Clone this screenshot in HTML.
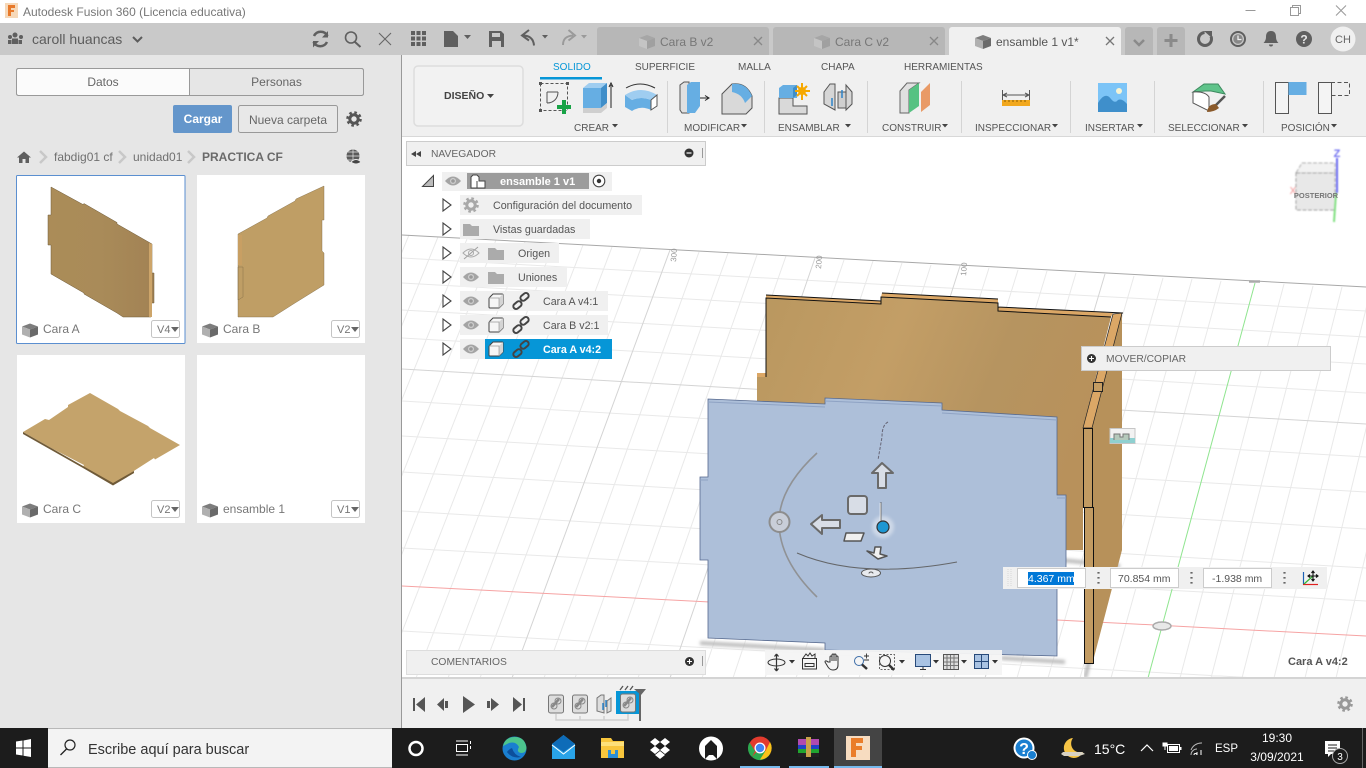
<!DOCTYPE html>
<html lang="es"><head><meta charset="utf-8"><title>Autodesk Fusion 360</title>
<style>
html,body{margin:0;padding:0;width:1366px;height:768px;overflow:hidden;background:#fff}
svg{display:block;position:absolute;left:0;top:0}
text{font-family:"Liberation Sans",sans-serif;white-space:pre}
.g{fill:#666}.n{font-size:10.7px;fill:#555}.r{font-size:10px;fill:#555}
.c{font-size:12px;fill:#777}.v{font-size:11px;fill:#777}.w{fill:#fff}
</style></head><body>
<svg width="1366" height="768" viewBox="0 0 1366 768" xmlns="http://www.w3.org/2000/svg">
<defs>
<g id="gear"><circle r="4.2" fill="none" stroke="currentColor" stroke-width="3"/><circle r="6.6" fill="none" stroke="currentColor" stroke-width="2.4" stroke-dasharray="2.6 2.6"/></g>
<g id="cube"><path d="M-8-3 0-6 8-3 0 0z" fill="#7d7d7d"/><path d="M-8-3 0 0V8L-8 5z" fill="#b0b0b0"/><path d="M8-3 0 0V8L8 5z" fill="#6a6a6a"/></g>
<g id="eye"><path d="M-8 0Q0-9 8 0Q0 9-8 0z" fill="#a4a4a4"/><circle r="3" fill="#cfcfcf"/><circle r="1.800" fill="#999"/></g>
<path id="fold" d="M-8-6h7l2 2h7v10h-16z" fill="#ababab"/>
<path id="exp" d="M0 0V12L8 6z" fill="#fff" stroke="#444" stroke-width="1.100"/>
<g id="part"><path d="M-7-2Q-7-3-6-4L-3-7H6Q7-7 7-6V3L3 7H-6Q-7 7-7 6z" fill="#f6f6f6" stroke="#444" stroke-width="1"/><path d="M3-3V7L7 3V-7z" fill="#d4d4d4"/><path d="M-7-3H3V7" fill="none" stroke="#999" stroke-width=".7"/></g>
<g id="chain" fill="none" stroke="#444" stroke-width="2"><rect x="-1" y="-6.500" width="9" height="5.500" rx="2.700" transform="rotate(-40 3 -4)"/><rect x="-8" y="1" width="9" height="5.500" rx="2.700" transform="rotate(-40 -3 4)"/></g>
<g id="tl"><rect x="-7.500" y="-9" width="15" height="18" rx="2" fill="#ddd" stroke="#777"/><path d="M-4 3 3-5" stroke="#888" stroke-width="2.500" fill="none"/><circle cx="-2" cy="2" r="3" fill="none" stroke="#888"/><circle cx="2" cy="-3" r="3" fill="none" stroke="#888"/></g>
<clipPath id="vp"><rect x="402" y="137" width="964" height="541"/></clipPath>
<linearGradient id="wood" x1="0" y1="0" x2="1" y2=".3"><stop offset="0" stop-color="#b9975f"/><stop offset=".4" stop-color="#c39e66"/><stop offset=".7" stop-color="#b69460"/><stop offset="1" stop-color="#b8915b"/></linearGradient>
<linearGradient id="woodA" x1="0" y1="0" x2="1" y2="0"><stop offset="0" stop-color="#ab8c58"/><stop offset=".5" stop-color="#a98b59"/><stop offset="1" stop-color="#a28254"/></linearGradient>
<filter id="b1"><feGaussianBlur stdDeviation="1.500"/></filter>
<filter id="b2" x="-20%" y="-20%" width="140%" height="140%"><feGaussianBlur stdDeviation=".7"/></filter>
</defs>

<!-- title bar -->
<rect width="1366" height="23" fill="#fff"/>
<rect x="5" y="3" width="13" height="15" fill="#f6d8b8"/><path d="M8 5h7v3h-4v2h3v2h-3v4H8z" fill="#e8792a"/>
<text x="23" y="16" font-size="12" fill="#777">Autodesk Fusion 360 (Licencia educativa)</text>
<path d="M1245.500 10.500h10M1336 5.500l10 10M1346 5.500l-10 10" stroke="#999" fill="none"/>
<path d="M1290.500 7.500h8v8h-8zM1292.500 7.500v-2h8v8h-2" stroke="#999" fill="none"/>

<!-- left panel -->
<rect y="23" width="401" height="705" fill="#e6e6e6"/>
<rect y="23" width="402" height="32" fill="#c9c9c9"/>
<rect x="401" y="55" width="1" height="673" fill="#999"/>
<g fill="#5f5f5f"><circle cx="15" cy="35" r="2.500"/><circle cx="10" cy="37" r="2"/><circle cx="21" cy="37" r="2"/><rect x="12" y="38.500" width="6" height="5.500"/><rect x="8" y="40" width="3.500" height="4"/><rect x="18.500" y="40" width="3.500" height="4"/></g>
<text x="32" y="44" font-size="14" fill="#5c5c5c">caroll huancas</text>
<path d="M133 37l4.500 4.500 4.500-4.500" stroke="#5c5c5c" stroke-width="2" fill="none"/>
<path d="M327.500 36A7.500 7.500 0 0 0 314 36M313.500 42a7.500 7.500 0 0 0 13.500 0" stroke="#5f5f5f" stroke-width="2.500" fill="none"/><path d="M328 31v6.500h-6zM313 47.500v-6.500h6z" fill="#5f5f5f"/>
<circle cx="351" cy="37.500" r="5.500" fill="none" stroke="#5f5f5f" stroke-width="1.600"/><path d="M355 42l5.500 5" stroke="#5f5f5f" stroke-width="2"/>
<path d="M379 33l12 12M391 33l-12 12" stroke="#666" stroke-width="1.100"/>

<rect x="16.500" y="68.500" width="347" height="27" rx="2" fill="#e6e6e6" stroke="#999"/>
<path d="M19 69H189.500V95H19a2 2 0 0 1-2-2V71a2 2 0 0 1 2-2z" fill="#fbfbfb"/>
<rect x="16.500" y="68.500" width="347" height="27" rx="2" fill="none" stroke="#999"/><path d="M189.500 69v26" stroke="#999"/>
<text x="103" y="86" font-size="12" fill="#666" text-anchor="middle">Datos</text>
<text x="276.500" y="86" font-size="12" fill="#666" text-anchor="middle">Personas</text>
<rect x="173" y="105" width="59" height="28" rx="2" fill="#6496cb"/>
<text x="203" y="123" font-size="12" font-weight="bold" fill="#fff" text-anchor="middle">Cargar</text>
<rect x="238.500" y="105.500" width="99" height="27" rx="2" fill="#e8e8e8" stroke="#999"/>
<text x="288" y="124" font-size="12" fill="#666" text-anchor="middle">Nueva carpeta</text>
<use href="#gear" x="354" y="119" color="#555"/>
<path d="M17 157.500l7-6 7 6h-2v5.500h-3.500v-4h-3v4H19v-5.500z" fill="#5f5f5f"/>
<g fill="none" stroke="#c8c8c8" stroke-width="2.500"><path d="M40 151l6 6-6 6M119 151l6 6-6 6M188 151l6 6-6 6"/></g>
<text x="54" y="161" font-size="12" fill="#707070">fabdig01 cf</text>
<text x="133" y="161" font-size="12" fill="#707070">unidad01</text>
<text x="202" y="161" font-size="12" font-weight="bold" fill="#6a6a6a">PRACTICA CF</text>
<circle cx="353" cy="156" r="6.500" fill="#5a5a5a"/><path d="M346.500 156h13M353 149.500v13M348 152h10M348 160h10" stroke="#e6e6e6" stroke-width=".7"/><path d="M351 162q5-5 10 0q-5 4-10 0z" fill="#444" stroke="#e6e6e6"/>

<!-- cards -->
<rect x="17" y="175" width="168" height="168" fill="#fff"/>
<rect x="16.500" y="175.500" width="168.500" height="168" rx="1" fill="none" stroke="#5b8fd0"/>
<rect x="197" y="175" width="168" height="168" fill="#fff"/>
<rect x="17" y="355" width="168" height="168" fill="#fff"/>
<rect x="197" y="355" width="168" height="168" fill="#fff"/>
<path d="M51 187 83 204.500 84 203.500 117 222.500 117 224 152 244V273H154V303H151V317H123L117 313 84 294V293L51 274V245H48V215H51z" fill="url(#woodA)" stroke="#6e5a38" stroke-width=".5"/>
<path d="M149 243 152 244V317H149z" fill="#cda56a"/>
<path d="M238 234 267 218 268 216 295 201 296 199 324 186V220H322V251L324 253V285L295 303 273 317H238V267H243V297L238 300z" fill="#bf9e65" stroke="#7c6844" stroke-width=".4"/>
<path d="M238 235H242V265H238z" fill="#c89f63"/>
<path d="M23 432 45 419 49 420 68 407 68 405 90 393 118 409 120 411 148 426 150 428 180 445 155 459.500 154 458 133 471.500 134 473 113 485 83 467 84 465 53 449z" fill="#c4a36b"/>
<path d="M23 432 53 449 83 466 113 483 134 471V473L113 485.500 83 468 53 451 23 434z" fill="#6f5a38"/>
<g transform="translate(30 329.500)"><use href="#cube"/></g><g transform="translate(210 329.500)"><use href="#cube"/></g><g transform="translate(30 509.500)"><use href="#cube"/></g><g transform="translate(210 509.500)"><use href="#cube"/></g>
<text x="43" y="333" class="c">Cara A</text><text x="223" y="333" class="c">Cara B</text><text x="43" y="513" class="c">Cara C</text><text x="223" y="513" class="c">ensamble 1</text>
<g fill="#fff" stroke="#c4c4c4"><rect x="151.500" y="320.500" width="28" height="17" rx="2"/><rect x="331.500" y="320.500" width="28" height="17" rx="2"/><rect x="151.500" y="500.500" width="28" height="17" rx="2"/><rect x="331.500" y="500.500" width="28" height="17" rx="2"/></g>
<text x="157" y="333" class="v">V4</text><text x="337" y="333" class="v">V2</text><text x="157" y="513" class="v">V2</text><text x="337" y="513" class="v">V1</text>
<path d="M171 327h8l-4 5zM351 327h8l-4 5zM171 507h8l-4 5zM351 507h8l-4 5z" fill="#666"/>

<!-- top bar -->
<rect x="402" y="23" width="964" height="32" fill="#c9c9c9"/>
<g fill="#5f5f5f"><path d="M411 31h4v4h-4zM416.500 31h4v4h-4zM422 31h4v4h-4zM411 36.500h4v4h-4zM416.500 36.500h4v4h-4zM422 36.500h4v4h-4zM411 42h4v4h-4zM416.500 42h4v4h-4zM422 42h4v4h-4z"/>
<path d="M444 31h9l5 5v11h-14z"/><path d="M464 35h7l-3.500 4z"/>
<path d="M489 31h12l3 3v13h-15zM492 33v4h8v-4zM492 41v6h9v-6z" fill-rule="evenodd"/>
<path d="M542 35h6l-3 3.500z"/></g>
<path d="M529 30l-7 5.500 7 5M522.500 35.500c7 0 11 3 11.500 10" fill="none" stroke="#5f5f5f" stroke-width="2"/>
<path d="M563 45c0-6 3-9 10-9.500M568.500 30l6.500 5.500-6.500 5" fill="none" stroke="#9a9a9a" stroke-width="2"/><path d="M581 35h6l-3 3.500z" fill="#9a9a9a"/>
<path d="M600 27h166a3 3 0 0 1 3 3v25H597V30a3 3 0 0 1 3-3zM776 27h166a3 3 0 0 1 3 3v25H773V30a3 3 0 0 1 3-3z" fill="#b7b7b7"/>
<path d="M952 27h166a3 3 0 0 1 3 3v25H949V30a3 3 0 0 1 3-3z" fill="#f0f0f0"/>
<path d="M1128 27h22a3 3 0 0 1 3 3v25h-28V30a3 3 0 0 1 3-3zM1160 27h22a3 3 0 0 1 3 3v25h-28V30a3 3 0 0 1 3-3z" fill="#b7b7b7"/>
<g transform="translate(647 41)"><path d="M-8-3 0-6 8-3 0 0z" fill="#a6a6a6"/><path d="M-8-3 0 0V8L-8 5z" fill="#c4c4c4"/><path d="M8-3 0 0V8L8 5z" fill="#a0a0a0"/></g>
<g transform="translate(822 41)"><path d="M-8-3 0-6 8-3 0 0z" fill="#a6a6a6"/><path d="M-8-3 0 0V8L-8 5z" fill="#c4c4c4"/><path d="M8-3 0 0V8L8 5z" fill="#a0a0a0"/></g>
<g transform="translate(983 41)"><use href="#cube"/></g>
<text x="660" y="46" font-size="12" fill="#777">Cara B v2</text>
<text x="835" y="46" font-size="12" fill="#777">Cara C v2</text>
<text x="996" y="46" font-size="12" fill="#555">ensamble 1 v1*</text>
<path d="M754 37l8 8M762 37l-8 8M930 37l8 8M938 37l-8 8" stroke="#888" stroke-width="1.300"/>
<path d="M1106 37l8 8M1114 37l-8 8" stroke="#777" stroke-width="1.300"/>
<path d="M1134 40l5 5 5-5" stroke="#8a8a8a" stroke-width="2.500" fill="none"/>
<path d="M1171 34v13M1164.500 40.500h13" stroke="#8a8a8a" stroke-width="3"/>
<circle cx="1205" cy="39" r="6.500" fill="none" stroke="#5f5f5f" stroke-width="3" stroke-dasharray="30 8"/><path d="M1204 31h8v7z" fill="#5f5f5f"/>
<circle cx="1238" cy="39" r="7" fill="none" stroke="#5f5f5f" stroke-width="2"/><circle cx="1238" cy="39" r="4.700" fill="#888"/><path d="M1238 35.500v4h3.500" stroke="#eee" stroke-width="1.300" fill="none"/>
<path d="M1271 31c4 0 5 3 5 6 0 3 1.500 5 2.500 6h-15c1-1 2.500-3 2.500-6 0-3 1-6 5-6zM1269 44.500h4a2 2 0 0 1-4 0z" fill="#5f5f5f"/>
<circle cx="1304" cy="39" r="8" fill="#5f5f5f"/><text x="1304" y="43.500" font-size="12" font-weight="bold" fill="#e6e6e6" text-anchor="middle">?</text>
<circle cx="1343" cy="39" r="12.500" fill="#f0f0f0"/><text x="1343" y="43" font-size="11" fill="#666" text-anchor="middle">CH</text>

<!-- toolbar -->
<rect x="402" y="55" width="964" height="82" fill="#f0f0f0"/>
<rect x="402" y="136" width="964" height="1" fill="#d8d8d8"/>
<rect x="414" y="66" width="109" height="60" rx="4" fill="#f2f2f2" stroke="#ddd" stroke-width="1.500"/>
<text x="444" y="99" font-size="10.500" font-weight="bold" fill="#444">DISEÑO</text><path d="M487 94h7l-3.500 4z" fill="#444"/>
<g font-size="10" fill="#555"><text x="553" y="70" fill="#0696d7">SOLIDO</text><text x="635" y="70">SUPERFICIE</text><text x="738" y="70">MALLA</text><text x="821" y="70">CHAPA</text><text x="904" y="70">HERRAMIENTAS</text>
<text x="574" y="131">CREAR</text><text x="684" y="131">MODIFICAR</text><text x="778" y="131">ENSAMBLAR</text><text x="882" y="131">CONSTRUIR</text><text x="975" y="131">INSPECCIONAR</text><text x="1085" y="131">INSERTAR</text><text x="1168" y="131">SELECCIONAR</text><text x="1281" y="131">POSICIÓN</text></g>
<rect x="540" y="77" width="62" height="2.500" fill="#0696d7"/>
<path d="M612 124h6l-3 3.500zM741 124h6l-3 3.500zM845 124h6l-3 3.500zM942 124h6l-3 3.500zM1052 124h6l-3 3.500zM1137 124h6l-3 3.500zM1242 124h6l-3 3.500zM1331 124h6l-3 3.500z" fill="#444"/>
<path d="M667.500 81v52M764.500 81v52M867.500 81v52M961.500 81v52M1070.500 81v52M1154.500 81v52M1263.500 81v52" stroke="#d4d4d4"/>
<!-- sketch -->
<rect x="540.500" y="83.500" width="27" height="27" fill="none" stroke="#555" stroke-dasharray="3 2"/><path d="M547 92h11M547 92v11M558 92c0 6-4 11-11 11" fill="none" stroke="#555"/><path d="M539 82h3v3h-3zM566 82h3v3h-3zM539 109h3v3h-3z" fill="#555"/>
<path d="M562 100h4v5h5v4h-5v5h-4v-5h-5v-4h5z" fill="#18a346"/>
<!-- extrude -->
<path d="M583 88 589 83H607L601 88z" fill="#9fcdf0"/><rect x="583" y="88" width="18" height="20" fill="#66aee3"/><path d="M601 88 607 83V103L601 108z" fill="#3f8ec9"/><path d="M583 108h18l6-5v5l-6 5h-18z" fill="#cfcfcf"/><path d="M611 108V85M609 87l2-4 2 4" stroke="#222" fill="none"/>
<!-- revolve -->
<path d="M625 95 632 100Q641 96 651 100V110Q641 105 632 111L625 107z" fill="#66aee3"/><path d="M625 95Q641 85 657 95L651 100Q641 96 632 100z" fill="#9fcdf0"/><path d="M651 100 657 95V106L651 110z" fill="#fff" stroke="#555"/><path d="M626 88Q640 80 655 88" fill="none" stroke="#333"/>
<!-- press pull -->
<path d="M680 85 684 82H689V113H682L680 110z" fill="#e0e0e0" stroke="#555"/><path d="M687 85 691 82H700V106L695 113H687z" fill="#66aee3"/><path d="M700 98h8M705 95.500l4 2.500-4 2.500" stroke="#222" fill="none"/>
<!-- fillet -->
<path d="M722 94 732 84Q746 82 752 96V108L746 114H722z" fill="#d9d9d9" stroke="#555"/><path d="M732 84Q746 82 752 96L745 103Q742 94 732 92z" fill="#66aee3"/>
<!-- assemble -->
<path d="M779 98h14v8h14v8h-28z" fill="#d9d9d9" stroke="#555"/><path d="M779 88l4-3h14v13h-18z" fill="#66aee3"/><path d="M793 98V88l4-3v10z" fill="#3f8ec9"/>
<path d="M802 83v7M802 93v7M795 91h15M797 86l10 10M807 86l-10 10" stroke="#f6a800" stroke-width="2"/><circle cx="802" cy="91" r="4" fill="#f6a800"/>
<!-- joint -->
<path d="M824 92 830 84h5v26l-11-6zM852 92 846 85v25l6-6z" fill="#d6d6d6" stroke="#555"/><path d="M838 92h8v16h-8z" fill="#cfcfcf" stroke="#555"/><path d="M832 98v8M842 90v8" stroke="#2d83c9" stroke-width="1.500"/>
<!-- construct -->
<path d="M900 91 907 83H919L909 90V113H900z" fill="#e0e0e0" stroke="#666"/><path d="M909 90 919 83V106L909 113z" fill="#56c282"/><path d="M921 92 930 83V105L921 112z" fill="#e99a66"/>
<!-- measure -->
<path d="M1002.500 90v10M1029.500 90v10M1003 95h26M1007 93l-4 2 4 2M1025 93l4 2-4 2" stroke="#555" fill="none"/><rect x="1002" y="100" width="28" height="6" fill="#f2a81d"/><path d="M1005 100v2M1009 100v2M1013 100v2M1017 100v2M1021 100v2M1025 100v2" stroke="#8a5c00"/>
<!-- insert -->
<rect x="1098" y="83" width="29" height="29" fill="#7cc4f7"/><path d="M1098 112V103Q1105 91 1111 99 1115 104 1118 100 1122 98 1127 104V112z" fill="#3f8fcb"/><circle cx="1119" cy="91" r="3" fill="#f6f3d4"/>
<!-- select -->
<path d="M1193 92 1204 84H1218L1225 94 1211 91 1205 91z" fill="#5fc38a" stroke="#3d8a5f"/><path d="M1193 92V103L1209 111V97Q1205 91 1193 92z" fill="#fff" stroke="#555"/>
<path d="M1225 96 1215 106" stroke="#555" stroke-width="2.500"/><path d="M1216 104Q1208 104 1207 112 1214 112 1219 108z" fill="#8a5a2b"/>
<!-- position -->
<rect x="1275.500" y="82.500" width="13" height="31" fill="#f4f4f4" stroke="#555"/><rect x="1288.500" y="82" width="18" height="13" fill="#66aee3"/>
<rect x="1318.500" y="82.500" width="13" height="31" fill="#f4f4f4" stroke="#555"/><path d="M1331 82.500h18.500v13h-18.500" fill="none" stroke="#555" stroke-dasharray="4 2.500"/>

<!-- viewport -->
<rect x="402" y="137" width="964" height="541" fill="#fff"/>
<g clip-path="url(#vp)">
<path stroke="#e9e9e9" fill="none" d="M409 235 226 678M438 237 258 678M467 239 289 678M496 240 321 678M525 242 353 678M554 243 384 678M583 245 416 678M612 247 448 678M641 248 480 678M699 252 544 678M728 253 575 678M757 255 607 678M786 256 638 678M844 260 702 678M873 261 733 678M902 263 765 678M931 265 796 678M989 268 859 678M1018 270 891 678M1047 271 922 678M1076 273 954 678M1134 276 1017 678M1163 278 1048 678M1192 279 1080 678M1221 281 1111 678M1284 284 1180 678M1313 286 1211 678M1342 287 1242 678M1371 289 1274 678M1400 290 1305 678M1429 292 1336 678
M402 258 1366 311M402 283 1366 337M402 310 1366 364M402 338 1366 393M402 401 1366 457M402 436 1366 492M402 472 1366 529M402 511 1366 568M402 548 1366 601M402 631 1366 684"/>
<path stroke="#d4d4d4" fill="none" d="M670 250 512 678M815 258 670 678M960 266 828 678M1105 274 985 678M1458 294 1368 678M402 369 1366 424"/>
<path stroke="#a8a8a8" fill="none" d="M402 235 1366 287"/>
<path d="M402 586 1366 636" stroke="#f6a3a3"/>
<path d="M1255 283 1148 678" stroke="#8fe58f"/>
<g font-size="8" fill="#999"><text transform="translate(676 262) rotate(-85)">300</text><text transform="translate(821 269) rotate(-85)">200</text><text transform="translate(966 276) rotate(-85)">100</text></g>
<ellipse cx="1162" cy="626" rx="9" ry="4" fill="#e8e8e8" stroke="#aaa" stroke-width="1.500"/>
<path d="M1249 281.500h11" stroke="#aaa" stroke-width="2.500"/>
<path d="M700 643 825 650M1001 658 1065 662M1060 560 1120 566" stroke="#bcbcbc" stroke-width="4" filter="url(#b1)"/>
<path d="M1092 650 1085 678" stroke="#b8b8b8" stroke-width="4" filter="url(#b1)"/>

<!-- brown panel -->
<path d="M1122 313V550L1092 665V428z" fill="#b7915a"/>
<path d="M766 298 881 304V297L998 303V310L1111 317 1083 428V550H1066L757 530V377H766z" fill="url(#wood)"/>
<path d="M766 295 881 301 881 304 766 298zM882 293 998 299V303L881 297zM998 307 1113 313 1111 317 998 311zM757 373H766V377H757z" fill="#dba766"/>
<path d="M766 377V298L881 304V297L998 303V311L1111 317M766 295 881 301M882 293 998 299M998 307 1123 313" fill="none" stroke="#111" stroke-width="1"/>
<path d="M1113 314 1122 313 1092 428H1083z" fill="#dba766" stroke="#222" stroke-width=".7"/>
<rect x="1093.500" y="382.500" width="9" height="9" fill="#c49c62" stroke="#222"/>
<rect x="1083.500" y="428.500" width="9" height="79" fill="#c29b62" stroke="#111"/>
<rect x="1084.500" y="507.500" width="9" height="156" fill="#c29b62" stroke="#111"/>
<path d="M1110 428.500h25v15h-25z" fill="#f2f2f2" stroke="#c6c6c6"/><path d="M1110 438h25v5h-25z" fill="#8fd0d0"/><path d="M1114 440v-6h6v3h3v-3h6v6" fill="#b5c9bb" stroke="#777"/>

<!-- blue panel -->
<path d="M708 399 825 404V398L942 403V410L1057 417V495H1066V575H1057V656L825 650V643L708 638V560H700V477H708z" fill="#adbfd9" stroke="#56698e" stroke-width=".8"/>
<path d="M708 402 825 407M825 401 942 406M942 413 1057 420M1057 498H1066M700 480H708" stroke="#8fa3c4" fill="none"/>

<!-- gizmo -->
<path d="M817 453Q779 488 779 522 779 560 817 597" fill="none" stroke="#8d8d8d" stroke-width="1.600" opacity=".9"/>
<path d="M797 553Q860 580 957 562" fill="none" stroke="#5c5c5c" stroke-width="1" opacity=".9"/>
<path d="M888 422Q882 425 882 437L878 460" fill="none" stroke="#667" stroke-dasharray="3 1.500"/>
<path d="M882 463 872 473H878V488H886V473H893z" fill="#d8dde6" stroke="#6a6a6a" stroke-width="2" stroke-linejoin="round"/>
<rect x="848" y="496" width="19" height="18" rx="3" fill="#d8dde6" stroke="#6a6a6a" stroke-width="2"/>
<path d="M811 524 822 515V520H840V528H822V534z" fill="#d8dde6" stroke="#6a6a6a" stroke-width="2" stroke-linejoin="round"/>
<path d="M846 533H864L861 541H844z" fill="#f0f0f0" stroke="#555" stroke-width="1.500" stroke-linejoin="round"/>
<path d="M867 551 874 553 875 547 881 547 880 554 887 556 878 559z" fill="#f0f0f0" stroke="#555" stroke-width="1.500" stroke-linejoin="round"/>
<circle cx="883" cy="527" r="11" fill="#fff" opacity=".4" filter="url(#b1)"/>
<path d="M880.500 503V523" stroke="#fff" stroke-width="1.500"/><path d="M881 502V522" stroke="#555" stroke-width=".8"/>
<circle cx="883" cy="527" r="6" fill="#1d97d3" stroke="#333" stroke-width="1.200"/>
<circle cx="779.500" cy="522" r="10" fill="#c9ced8" stroke="#8d8d8d" stroke-width="2"/><circle cx="779.500" cy="522" r="2.500" fill="none" stroke="#888"/>
<ellipse cx="871" cy="573" rx="9.500" ry="4" fill="#e8eaee" stroke="#555"/><path d="M869 573.500a2 1.500 0 0 1 4 0" fill="none" stroke="#555"/>

<!-- viewcube -->
<g filter="url(#b2)">
<path d="M1302 163H1335V173H1296z" fill="#f2f2f2" stroke="#aaa" stroke-dasharray="4 1.500"/>
<path d="M1296 173H1335V210H1296z" fill="#e8e8e8" stroke="#999" stroke-dasharray="4 1.500"/>
<path d="M1337 158V193" stroke="#6b6bf0" stroke-width="2"/><path d="M1336 193 1334 222" stroke="#7fe07f" stroke-width="2"/>
<text x="1337" y="157" font-size="11" font-weight="bold" fill="#7070f0" text-anchor="middle">Z</text>
<text x="1293" y="194" font-size="10" fill="#f29090" text-anchor="middle">X</text>
</g>
<text x="1316" y="198" font-size="7.500" font-weight="bold" fill="#777" text-anchor="middle">POSTERIOR</text>
</g>

<!-- navigator -->
<rect x="406.500" y="141.500" width="299" height="24" fill="#f0f0f0" stroke="#ccc"/>
<path d="M416 151v6l-5-3zM421 151v6l-5-3z" fill="#444"/>
<text x="431" y="157" font-size="10.300" fill="#666">NAVEGADOR</text>
<circle cx="689" cy="153" r="4.500" fill="#333"/><path d="M686.500 153h5" stroke="#fff" stroke-width="1.200"/><path d="M702.500 148v10" stroke="#999"/>
<path d="M422.500 186.500 433.500 175.500V186.500z" fill="#bbb" stroke="#444"/>
<rect x="442" y="172" width="170" height="19" fill="#f0f0f0"/>
<use href="#eye" x="453" y="181"/>
<rect x="467" y="173" width="122" height="16" fill="#9c9c9c"/>
<path d="M471 177 473 175H477L479 177V181H485V188H471z" fill="#fff" stroke="#444"/><path d="M477 181V188M479 177V181" stroke="#444" fill="none"/>
<text x="500" y="185" font-size="11" font-weight="bold" fill="#fff">ensamble 1 v1</text>
<circle cx="599" cy="181" r="5.800" fill="#fff" stroke="#444" stroke-width="1.100"/><circle cx="599" cy="181" r="2.200" fill="#333"/>
<g fill="#f0f0f0"><rect x="460" y="195" width="182" height="20"/><rect x="460" y="219" width="130" height="20"/><rect x="460" y="243" width="99" height="20"/><rect x="460" y="267" width="107" height="20"/><rect x="460" y="291" width="148" height="20"/><rect x="460" y="315" width="148" height="20"/><rect x="460" y="339" width="152" height="20"/></g>
<rect x="485" y="339" width="127" height="20" fill="#0696d7"/>
<use href="#exp" x="443" y="199"/><use href="#exp" x="443" y="223"/><use href="#exp" x="443" y="247"/><use href="#exp" x="443" y="271"/><use href="#exp" x="443" y="295"/><use href="#exp" x="443" y="319"/><use href="#exp" x="443" y="343"/>
<use href="#gear" x="471" y="205" color="#a8a8a8"/>
<use href="#fold" x="471" y="230"/>
<path d="M463 253Q471 245 479 253Q471 261 463 253z" fill="none" stroke="#aaa"/><circle cx="471" cy="253" r="2.500" fill="none" stroke="#aaa"/><path d="M464 259 478 247" stroke="#a0a0a0"/>
<use href="#fold" x="496" y="254"/><use href="#eye" x="471" y="277"/><use href="#fold" x="496" y="278"/>
<use href="#eye" x="471" y="301"/><use href="#eye" x="471" y="325"/><use href="#eye" x="471" y="349"/>
<use href="#part" x="496" y="301"/><use href="#part" x="496" y="325"/><use href="#part" x="496" y="349"/>
<use href="#chain" x="521" y="301"/><use href="#chain" x="521" y="325"/><use href="#chain" x="521" y="349"/>
<text x="493" y="209" class="n">Configuración del documento</text>
<text x="493" y="233" class="n">Vistas guardadas</text>
<text x="518" y="257" class="n">Origen</text>
<text x="518" y="281" class="n">Uniones</text>
<text x="543" y="305" class="n">Cara A v4:1</text>
<text x="543" y="329" class="n">Cara B v2:1</text>
<text x="543" y="353" font-size="10.700" font-weight="bold" fill="#fff">Cara A v4:2</text>

<!-- move panel -->
<rect x="1081.500" y="346.500" width="249" height="24" fill="#f0f0f0" stroke="#ccc"/>
<circle cx="1091.500" cy="358.500" r="4.500" fill="#333"/><path d="M1089 358.500h5M1091.500 356v5" stroke="#fff" stroke-width="1.100"/>
<text x="1106" y="362" font-size="10.300" fill="#666">MOVER/COPIAR</text>

<!-- comments -->
<rect x="406.500" y="650.500" width="299" height="24" fill="#f0f0f0" stroke="#ddd"/>
<text x="431" y="665" font-size="10.300" fill="#666">COMENTARIOS</text>
<circle cx="689.500" cy="661.500" r="4.500" fill="#333"/><path d="M687 661.500h5M689.500 659v5" stroke="#fff" stroke-width="1.100"/><path d="M702.500 656v10" stroke="#999"/>

<!-- coordinates bar -->
<rect x="1003" y="567" width="324" height="22" fill="#f0f0f0"/>
<path d="M1008 569v18M1011 569v18" stroke="#d8d8d8" stroke-dasharray="1 1"/>
<g fill="#fff" stroke="#ccc"><rect x="1017.500" y="568.500" width="68" height="19"/><rect x="1110.500" y="568.500" width="68" height="19"/><rect x="1203.500" y="568.500" width="68" height="19"/></g>
<rect x="1028" y="572" width="46" height="13" fill="#0078d7"/>
<text x="1028" y="582" font-size="10.500" fill="#fff">4.367 mm</text>
<text x="1118" y="582" font-size="10.500" fill="#555">70.854 mm</text>
<text x="1212" y="582" font-size="10.500" fill="#555">-1.938 mm</text>
<path d="M1098.500 572v1.600M1098.500 577v1.600M1098.500 582v1.600M1191.500 572v1.600M1191.500 577v1.600M1191.500 582v1.600M1284.500 572v1.600M1284.500 577v1.600M1284.500 582v1.600" stroke="#666" stroke-width="2.200"/>
<path d="M1303.500 572V584.500" stroke="#1a5fb4" stroke-width="1.200"/><path d="M1303 584.500H1318" stroke="#e02020" stroke-width="1.200"/><path d="M1304 584 1313 576" stroke="#36b536" stroke-width="1.200"/>
<path d="M1313 571v10M1308 576h10M1311.500 573l1.500-2 1.500 2M1311.500 579l1.500 2 1.500-2M1310 574.500l-2 1.500 2 1.500M1316 574.500l2 1.500-2 1.500" stroke="#111" fill="none" stroke-width="1.100"/>

<!-- nav bar -->
<rect x="765" y="650" width="237" height="25" fill="#f4f4f4" opacity=".95"/>
<g fill="none" stroke="#333">
<path d="M776.500 654V671M776.500 654l-2 2.500M776.500 654l2 2.500M776.500 671l-2-2.500M776.500 671l2-2.500" stroke-width="1.200"/><ellipse cx="776.500" cy="662.500" rx="8.500" ry="3.500"/>
<rect x="802.500" y="658.500" width="14" height="10.500"/><path d="M805 663.500h9v3h-9z"/><path d="M803 658 806 654l2 2 2-3 2 3 3-2v4"/>
<path d="M830 662v-5a1 1 0 0 1 2 0v4v-6a1 1 0 0 1 2 0v6v-6a1 1 0 0 1 2 0v6v-4a1 1 0 0 1 2 0v8q0 5-5 5-3 0-5-3l-3-5c0-2 2-1 3 0z"/>
<circle cx="859" cy="661" r="4.500" stroke="#3c6da8"/><path d="M862 664.500l5 4.500" stroke-width="2.500"/><path d="M864 656h5M866.500 653.500v5M864 660h5" stroke-width=".9"/>
<rect x="879.500" y="654.500" width="15" height="15" stroke="#666" stroke-dasharray="2 1.500"/><circle cx="885" cy="661" r="5.500"/><path d="M889 665l5 5" stroke-width="2.500"/>
</g>
<rect x="915.500" y="654.500" width="15" height="12" fill="#a9c3e3" stroke="#274a7a"/><path d="M920 669.500h6M923 667v2" stroke="#333"/>
<rect x="943.500" y="654.500" width="15" height="15" fill="#ddd" stroke="#555"/><path d="M947 655v14M950.500 655v14M954 655v14M944 658h14M944 662h14M944 665.500h14" stroke="#777"/>
<rect x="974.500" y="654.500" width="14" height="14" fill="#a9c3e3" stroke="#274a7a"/><path d="M981.500 655v13M975 661.500h13" stroke="#274a7a"/>
<path d="M789 660h6l-3 3.500zM899 660h6l-3 3.500zM933 660h6l-3 3.500zM961 660h6l-3 3.500zM992 660h6l-3 3.500z" fill="#333"/>

<text x="1288" y="665" font-size="11" font-weight="bold" fill="#555">Cara A v4:2</text>

<!-- bottom panel -->
<rect x="402" y="677" width="964" height="2" fill="#d4d4d4"/>
<rect x="402" y="679" width="964" height="49" fill="#f0f0f0"/>
<g fill="#555"><path d="M413 698h2v13h-2zM425 697v15l-9-7.500z"/><path d="M444 698v13l-7-6.500zM445 701h3v7h-3z"/><path d="M463 696v17l12-8.500z"/><path d="M487 701h3v7h-3zM491 698v13l8-6.500z"/><path d="M513 697v15l9-7.500zM523 698h2v13h-2z"/></g>
<use href="#tl" x="556" y="704"/><use href="#tl" x="580" y="704"/>
<g transform="translate(604 704)"><path d="M-7 7V-6L-3-9H0V9zM7 7V-6L3-3V9z" fill="#ddd" stroke="#777"/><path d="M-1-1V6M2-4V3" stroke="#2d83c9" stroke-width="1.500"/></g>
<rect x="616" y="691" width="23" height="23" fill="#0696d7"/><use href="#tl" x="628" y="703"/>
<path d="M620 690 623 686M625 690 628 686M630 690 633 686" stroke="#555" stroke-width="1.300"/>
<path d="M634 689h12l-5 6zM639 689h2v32h-2z" fill="#666"/>
<path d="M556 714v6h72v-6M580 716v4M604 716v4" fill="none" stroke="#cfcfcf" stroke-width="1.500"/>
<use href="#gear" x="1345" y="704" color="#999"/>

<!-- taskbar -->
<rect y="728" width="1366" height="40" fill="#1c1c1c"/>
<path d="M16 741.500 22.500 740.500V747.500H16zM23.500 740.500 31 739V747.500H23.500zM16 748.500H22.500V755.500L16 754.500zM23.500 748.500H31V757L23.500 755.700z" fill="#fff"/>
<rect x="48" y="729" width="344" height="38" fill="#f3f3f3"/><rect x="48" y="728" width="344" height="1" fill="#b8b8b8"/><rect x="48" y="767" width="344" height="1" fill="#b8b8b8"/>
<circle cx="70" cy="745" r="5" fill="none" stroke="#222" stroke-width="1.200"/><path d="M66.500 749 60.500 755" stroke="#222" stroke-width="1.300"/>
<text x="88" y="754" font-size="14.500" fill="#333">Escribe aquí para buscar</text>
<circle cx="416" cy="748.500" r="6.500" fill="none" stroke="#fff" stroke-width="2.500"/>
<path d="M456 741h12M456 755h12M456.500 744.500h11v7h-11zM470.500 741v3M470.500 746v3" stroke="#fff" fill="none"/>
<circle cx="514.500" cy="748.500" r="12" fill="#1a7fd0"/><path d="M503 746Q505 737 515 737 525 737 526.500 748 526 753 521 753 516 752 519 747 516 741 509 743 505 745 503 746z" fill="#4cc48d"/><path d="M507 752Q512 759 521 757 514 755 512 748 509 749 507 752z" fill="#0c4f9c"/>
<path d="M552 744 563.500 735 575 744V759H552z" fill="#29a3e8"/><path d="M552 744 563.500 735 575 744 563.500 752z" fill="#0e6cb8"/><path d="M552 745 563.500 754 575 745" stroke="#fff" fill="none"/>
<path d="M601 738h10l2 3h11v17h-23z" fill="#f8c63d"/><path d="M601 742h23v4h-23z" fill="#fde07a"/><path d="M608 750h10v8h-10z" fill="#2d8fd5"/><path d="M611 750h4v4h-4z" fill="#f8c63d"/>
<path d="M655 738 660 742 655 746 650 742zM665 738 670 742 665 746 660 742zM655 746 660 750 655 754 650 750zM665 746 670 750 665 754 660 750zM660 751 665 755 660 759 655 755z" fill="#fff"/>
<circle cx="711" cy="748.500" r="12" fill="#fff"/><path d="M705 759V746L711 740 717 746V759L713 755H709z" fill="#1c1c1c"/>
<circle cx="760" cy="748" r="11.500" fill="#e33b2e"/><path d="M760 748 770 754A11.500 11.500 0 0 1 752 757z" fill="#2da94f"/><path d="M770 742A11.500 11.500 0 0 1 760 759.500L766 750z" fill="#f9c21a"/><path d="M749.500 742.500 755 751 752 757A11.500 11.500 0 0 1 749.500 742.500z" fill="#2da94f"/><circle cx="760" cy="748" r="5.500" fill="#fff"/><circle cx="760" cy="748" r="4.200" fill="#4285f4"/>
<rect x="798" y="739" width="21" height="18" fill="#6b3fa0"/><rect x="798" y="745" width="21" height="4" fill="#2142c8"/><rect x="798" y="749" width="21" height="4" fill="#21a52f"/><rect x="798" y="753" width="21" height="4" fill="#222"/><rect x="798" y="739" width="21" height="6" fill="#b04ab0"/><rect x="806" y="737" width="5" height="20" fill="#c9a24a"/>
<rect x="834" y="728" width="48" height="40" fill="#444"/>
<rect x="846" y="736" width="24" height="24" fill="#f7dcc0"/><path d="M851 738h12v5h-7v3h6v4h-6v7h-5z" fill="#ea7d2a"/>
<path d="M740 766h40v2h-40zM789 766h40v2h-40zM834 766h48v2h-48z" fill="#76b9ed"/>
<circle cx="1024" cy="748" r="10.500" fill="#fff"/><circle cx="1024" cy="748" r="8.500" fill="#1a7fd0"/><text x="1024" y="754" font-size="16" font-weight="bold" fill="#fff" text-anchor="middle">?</text><circle cx="1032" cy="755" r="4.500" fill="#1a7fd0" stroke="#fff"/>
<path d="M1073 738A10 10 0 1 0 1083 752 9 9 0 0 1 1073 738z" fill="#f6c445"/><path d="M1063 752h19l3 2-6 2h-15l-3-2z" fill="#d8d2c2"/>
<text x="1094" y="754" font-size="14" fill="#fff">15°C</text>
<path d="M1141 751 1147 745 1153 751" stroke="#fff" stroke-width="1.200" fill="none"/>
<rect x="1167.500" y="744.500" width="12" height="8" fill="none" stroke="#fff"/><rect x="1169" y="746" width="9" height="5" fill="#fff"/><rect x="1180" y="747" width="1.500" height="3" fill="#fff"/><path d="M1163 743h4v3h-4zM1165 746v4" stroke="#fff" fill="#fff"/>
<path d="M1191 755a6 6 0 0 1 6-6M1191 750a11 11 0 0 1 11-7" stroke="#bbb" fill="none"/><path d="M1197 755a1.500 1.500 0 0 0-3 0M1201 755v-5M1197 755v-3" stroke="#fff" fill="none"/>
<text x="1215" y="752" font-size="11.500" fill="#fff">ESP</text>
<text x="1277" y="742" font-size="12" fill="#fff" text-anchor="middle">19:30</text>
<text x="1277" y="761" font-size="12" fill="#fff" text-anchor="middle">3/09/2021</text>
<path d="M1325 741h15v13h-9l-3 3v-3h-3z" fill="#fff"/><path d="M1328 745h9M1328 748h9M1328 751h6" stroke="#1c1c1c"/>
<circle cx="1340" cy="756" r="7.500" fill="#1c1c1c" stroke="#aaa"/><text x="1340" y="760" font-size="10" fill="#fff" text-anchor="middle">3</text>
<rect x="1362" y="728" width="1" height="40" fill="#666"/>
</svg>
</body></html>
